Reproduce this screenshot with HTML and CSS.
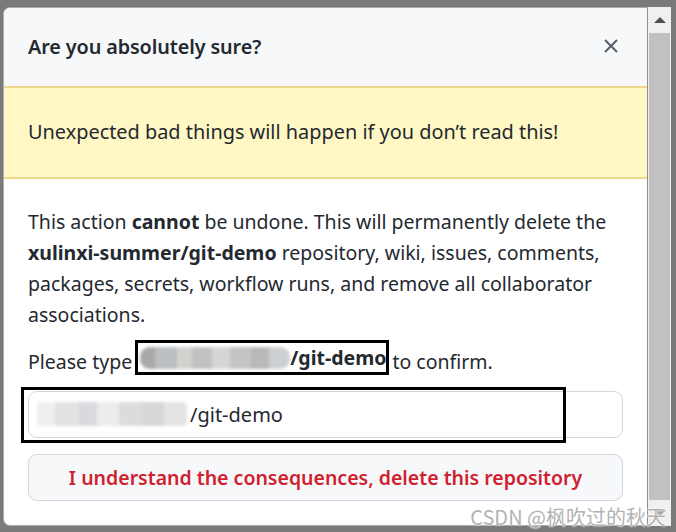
FILE: index.html
```html
<!DOCTYPE html>
<html lang="en">
<head>
<meta charset="utf-8">
<title>Delete repository</title>
<link rel="stylesheet" href="styles.css">
</head>
<body>
<div class="frame">
  <div class="dialog">
    <div class="dialog-header">
      <h3 class="dialog-title">Are you absolutely sure?</h3>
      <button class="close-btn" aria-label="Close">
        <svg width="16" height="16" viewBox="0 0 16 16"><path d="M2 2 L14 14 M14 2 L2 14" stroke="#57606a" stroke-width="2" fill="none"/></svg>
      </button>
    </div>
    <div class="flash-warn">Unexpected bad things will happen if you don’t read this!</div>
    <div class="dialog-body">
      <p class="lead">This action <strong>cannot</strong> be undone. This will permanently delete the <strong>xulinxi-summer/git-demo</strong> repository, wiki, issues, comments, packages, secrets, workflow runs, and remove all collaborator associations.</p>
      <p class="confirm">Please type <span class="marked"><span class="masked wide"></span><strong>/git-demo</strong></span> to confirm.</p>
      <div class="field">
        <div class="input"><span class="masked short"></span>/git-demo</div>
        <div class="mark-box"></div>
      </div>
      <button class="danger-btn">I understand the consequences, delete this repository</button>
    </div>
  </div>
  <div class="scrollbar">
    <div class="sb-arrow up"></div>
    <div class="sb-thumb"></div>
    <div class="sb-arrow down"></div>
  </div>
</div>
<div class="watermark">CSDN @枫吹过的秋天</div>
</body>
</html>
```
FILE: styles.css
```css
html, body {
  margin: 0;
  padding: 0;
}
body {
  position: relative;
  background: #7a7a7a;
  font-family: "Noto Sans", "Open Sans", sans-serif;
  color: #24292f;
  width: 676px;
  height: 532px;
  overflow: hidden;
}
.frame {
  display: flex;
  padding: 7px 4px 0 3px;
  height: 519px;
}
.dialog {
  flex: 0 0 645px;
  box-sizing: border-box;
  background: #fff;
  border: 1px solid #a9adb2;
  border-right-color: #8c8f93;
  border-radius: 7px 0 0 7px;
  overflow: hidden;
}
.dialog-header {
  display: flex;
  align-items: center;
  justify-content: space-between;
  height: 78px;
  box-sizing: border-box;
  padding: 0 24px 2px 24px;
  background: #f6f8fa;
}
.dialog-title {
  margin: 0;
  font-size: 19.8px;
  font-weight: 600;
  letter-spacing: -0.1px;
}
.close-btn {
  border: 0;
  background: none;
  padding: 0;
  margin-right: 4px;
  display: flex;
}
.flash-warn {
  height: 93px;
  box-sizing: border-box;
  display: flex;
  align-items: center;
  padding: 0 24px 2px 24px;
  background: #fff8c5;
  border-top: 2px solid #eed98a;
  border-bottom: 2px solid #eed98a;
  font-size: 19.9px;
}
.dialog-body {
  padding: 27px 24px 0 24px;
  font-size: 19.5px;
  line-height: 31px;
}
.lead, .confirm {
  margin: 0;
}
.lead {
  margin-bottom: 12px;
}
.confirm {
  margin-bottom: 14px;
}
.marked {
  display: inline-flex;
  align-items: center;
  outline: 3px solid #000;
  outline-offset: -1px;
  padding: 0 1px 0 3px;
}
.masked {
  display: inline-block;
  height: 22px;
  border-radius: 10px;
  filter: blur(1.5px);
  background: linear-gradient(90deg, #a9a9a9 0 10%, #bcbfc2 10% 25%, #d2d2ce 25% 35%, #bfc1c3 35% 48%, #d6d6d6 48% 60%, #c3c4c6 60% 74%, #b9b9b9 74% 86%, #cdd0d2 86% 100%);
}
.masked.wide {
  width: 150px;
}
.masked.short {
  width: 150px;
  height: 24px;
  border-radius: 4px;
  margin-right: 3px;
  background: linear-gradient(90deg, #efefef 0 12%, #e2e2e2 12% 28%, #d8dadd 28% 40%, #ececec 40% 55%, #dcdcdc 55% 70%, #d6d7d9 70% 85%, #e4e4e4 85% 100%);
}
.field {
  position: relative;
  margin-bottom: 16px;
}
.input {
  display: flex;
  align-items: center;
  height: 47px;
  box-sizing: border-box;
  padding: 0 8px 0 8px;
  border: 1px solid #d0d7de;
  border-radius: 9px;
  background: #fff;
  font-size: 20px;
}
.mark-box {
  position: absolute;
  left: -7px;
  top: -4px;
  width: 545px;
  height: 56px;
  box-sizing: border-box;
  border: 3px solid #000;
}
.danger-btn {
  display: block;
  width: 100%;
  height: 47px;
  border: 1px solid #d0d7de;
  border-radius: 9px;
  background: #f6f8fa;
  color: #cf222e;
  font-family: inherit;
  font-size: 19.5px;
  font-weight: 600;
  padding-top: 2px;
}
.watermark {
  position: absolute;
  right: 10px;
  bottom: 3px;
  font-family: "Noto Sans CJK SC", sans-serif;
  font-size: 20px;
  line-height: 24px;
  color: #b3b3b3;
  text-shadow: 0 0 2px #fff, 0 0 1px #fff;
}
.scrollbar {
  flex: 0 0 23px;
  display: flex;
  flex-direction: column;
  background: #f0f0f0;
}
.sb-arrow {
  height: 26px;
  display: flex;
  align-items: center;
  justify-content: center;
}
.sb-arrow::before {
  content: "";
  border-left: 6px solid transparent;
  border-right: 6px solid transparent;
}
.sb-arrow.up::before {
  border-bottom: 6px solid #505050;
}
.sb-arrow.down::before {
  border-top: 6px solid #a3a3a3;
}
.sb-thumb {
  flex: 1;
  margin: 0 1px;
  background: #c1c1c1;
}
```
